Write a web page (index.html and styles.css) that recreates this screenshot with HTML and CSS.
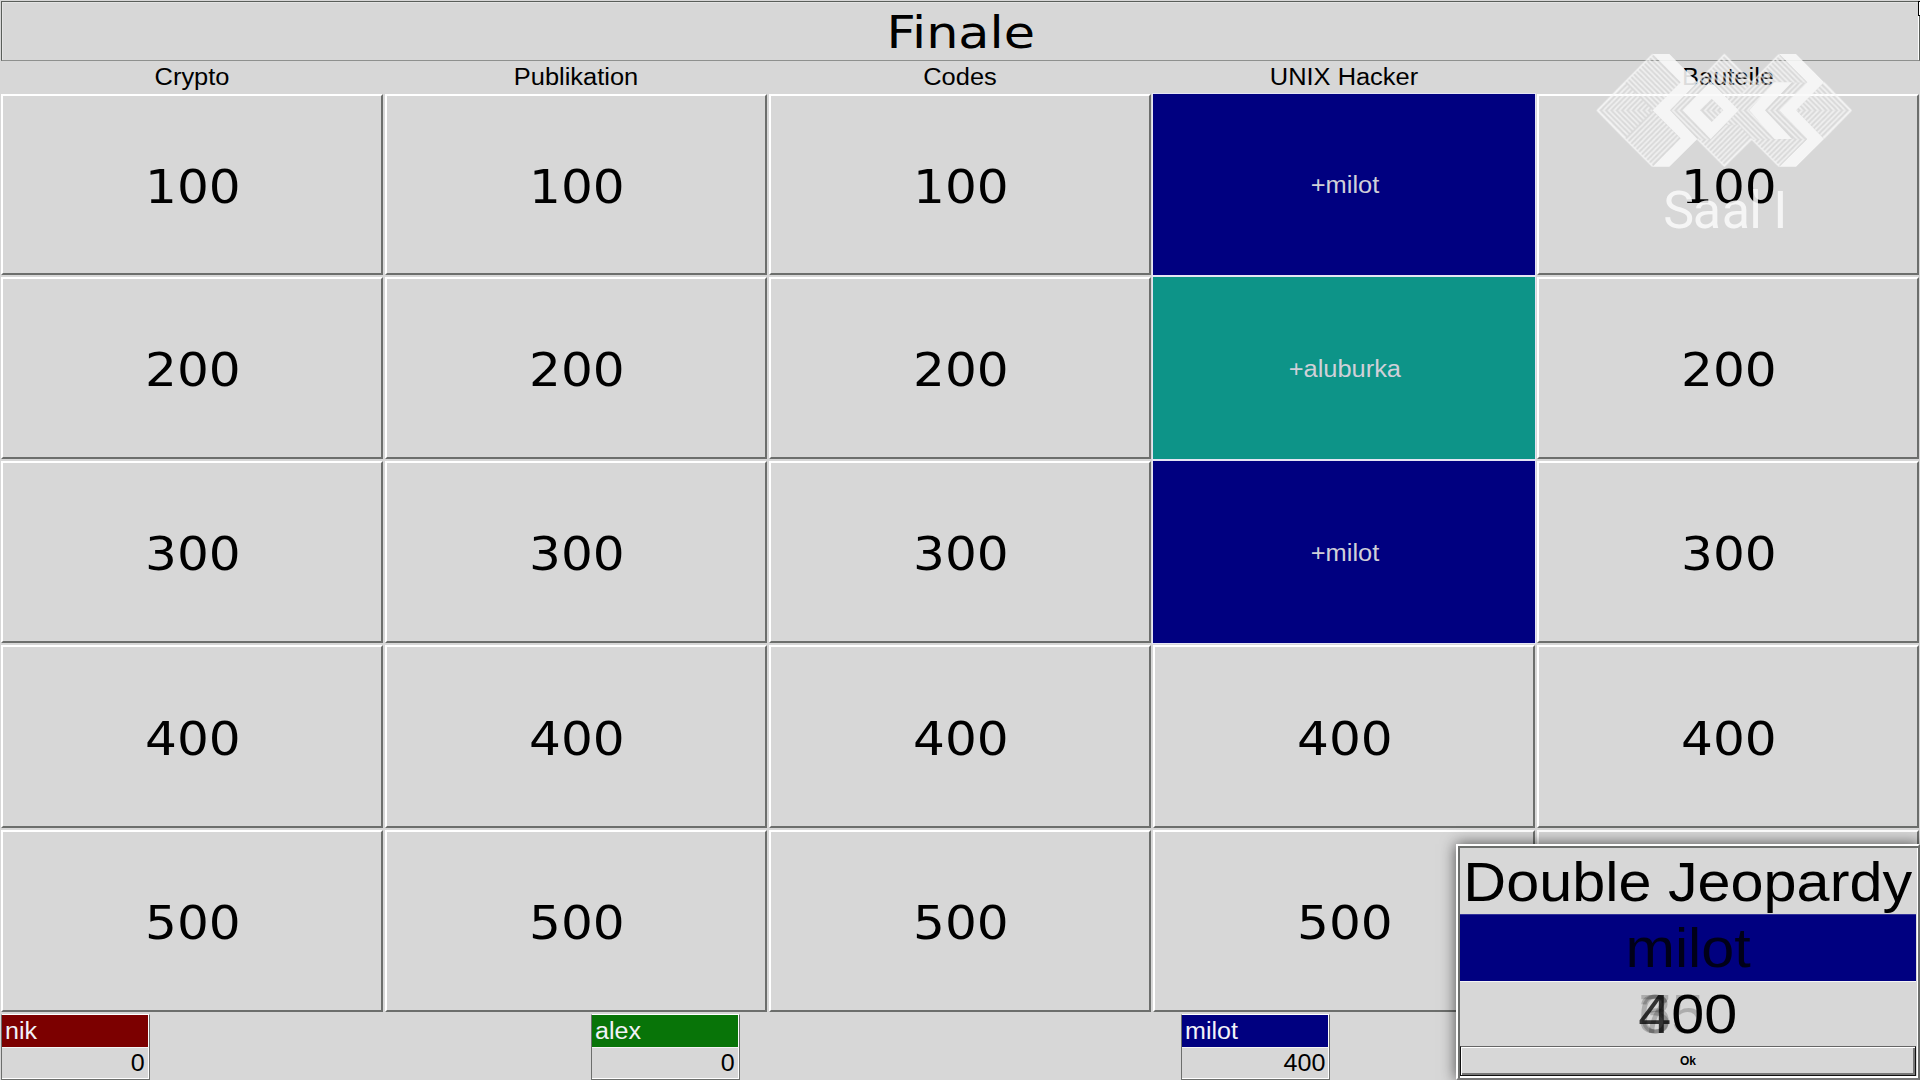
FILE: index.html
```html
<!DOCTYPE html>
<html lang="de">
<head>
<meta charset="utf-8">
<title>Finale</title>
<link rel="stylesheet" href="styles.css">
</head>
<body>
<main class="board">
  <h1 class="title"><span>Finale</span></h1>
  <div class="categories">
    <span>Crypto</span><span>Publikation</span><span>Codes</span><span>UNIX Hacker</span><span>Bauteile</span>
  </div>
  <div class="grid">
    <button class="cell"><span>100</span></button><button class="cell"><span>100</span></button><button class="cell"><span>100</span></button><button class="cell taken blue"><span>+milot</span></button><button class="cell"><span>100</span></button>
    <button class="cell"><span>200</span></button><button class="cell"><span>200</span></button><button class="cell"><span>200</span></button><button class="cell taken teal"><span>+aluburka</span></button><button class="cell"><span>200</span></button>
    <button class="cell"><span>300</span></button><button class="cell"><span>300</span></button><button class="cell"><span>300</span></button><button class="cell taken blue"><span>+milot</span></button><button class="cell"><span>300</span></button>
    <button class="cell"><span>400</span></button><button class="cell"><span>400</span></button><button class="cell"><span>400</span></button><button class="cell"><span>400</span></button><button class="cell"><span>400</span></button>
    <button class="cell"><span>500</span></button><button class="cell"><span>500</span></button><button class="cell"><span>500</span></button><button class="cell"><span>500</span></button><button class="cell"><span></span></button>
  </div>
  <div class="players">
    <div class="player"><div class="name red"><span>nik</span></div><div class="score"><span>0</span></div></div>
    <div class="player"><div class="name green"><span>alex</span></div><div class="score"><span>0</span></div></div>
    <div class="player"><div class="name blue"><span>milot</span></div><div class="score"><span>400</span></div></div>
  </div>
</main>

<section class="dialog">
  <div class="dialog-title"><span>Double Jeopardy</span></div>
  <div class="dialog-name"><span>milot</span></div>
  <div class="dialog-bet"><span class="bet"><i>4</i>00<b class="ghost">3</b><b class="ghost">6</b><b class="ghost">75</b></span></div>
  <button class="ok"><span>Ok</span></button>
</section>

<svg class="logo" viewBox="0 0 870 600" width="290" height="200">
  <defs>
    <pattern id="up" x="54" y="211" width="16" height="16" patternUnits="userSpaceOnUse">
      <path d="M-4 4L4-4M-4 20L20-4M12 20L20 12" stroke="#fafafa" stroke-width="5"/>
    </pattern>
    <pattern id="down" x="54" y="211" width="16" height="16" patternUnits="userSpaceOnUse">
      <path d="M-4-4L20 20M-4 12L4 20M12-4L20 4" stroke="#fafafa" stroke-width="5"/>
    </pattern>
    <g id="tip">
      <path fill="url(#up)" d="M50 211L134 127L218 211Z"/>
      <path fill="url(#down)" d="M50 211L134 295L218 211Z"/>
      <path fill="none" stroke="#fafafa" stroke-width="4" d="M134 127L52 211L134 295"/>
    </g>
  </defs>
  <g opacity=".88">
    <use href="#tip"/>
    <path fill="url(#down)" d="M134 127L218 42L302 127L218 211Z"/>
    <path fill="url(#up)" d="M134 295L218 211L302 295L218 380Z"/>
    <path fill="none" stroke="#fafafa" stroke-width="4" d="M134 127L218 43M134 295L218 379M352 127L433 44L515 127L598 43M352 297L433 378L515 297L598 379"/>
    <path fill="url(#down)" d="M352 127L433 42L515 127L475 170L433 170L395 127ZM515 127L598 42L682 127Z"/>
    <path fill="url(#up)" d="M352 297L395 297L435 255L475 255L515 297L433 380ZM515 297L682 297L598 380Z"/>
    <path fill="url(#up)" d="M270 211L352 127H395L308 211ZM433 170L475 170L515 127H590L508 211H475ZM555 211L640 127H682L598 211ZM360 211L395 176L430 211Z"/>
    <path fill="url(#down)" d="M270 211L352 297H395L308 211ZM435 253L475 255L515 297H590L508 211H475ZM555 211L640 297H682L598 211ZM360 211L395 246L430 211Z"/>
    <g transform="translate(865 0) scale(-1 1)"><use href="#tip"/></g>
    <g fill="#fafafa">
      <path d="M218 42H268L352 127L270 211L352 297L268 380H218L302 295L218 211L302 127Z"/>
      <path d="M598 42H648L732 127L648 211L732 297L648 380H598L682 297L598 211L682 127Z"/>
      <path d="M584 127H636L555 211L636 297H584L508 211Z"/>
      <path fill-rule="evenodd" d="M308 211L392 125L476 211L392 297ZM360 211L395 246L430 211L395 176Z"/>
    </g>
    <text class="hall" x="250 338 425 508 580" y="563">SaalI</text>
  </g>
</svg>
<div class="cursor"></div>
</body>
</html>
```
FILE: styles.css
```css
* { box-sizing: border-box; }
body {
  margin: 0;
  width: 1920px;
  height: 1080px;
  overflow: hidden;
  background: #d7d7d7;
  color: #000;
  font-family: "Liberation Sans", Arial, sans-serif;
}
span { display: inline-block; white-space: nowrap; }
button { margin: 0; padding: 0; background: #d7d7d7; color: inherit; font-family: inherit; border-radius: 0; }

.board { display: flex; flex-direction: column; height: 1080px; }
.title {
  flex: none;
  height: 60px;
  margin: 1px 0 0 1px;
  border: 1px solid #5a5e5a;
  border-bottom-color: #8e908e;
  box-shadow: inset 1px 1px 0 #e4e4e4, inset -1px 0 0 #fff;
  font: 400 45px/62px "DejaVu Sans", Verdana, sans-serif;
  text-align: center;
}
.title span { transform: scaleX(1.13); }
.categories {
  flex: none;
  height: 32px;
  display: grid;
  grid-template-columns: repeat(5, 384px);
  font-size: 23px;
  line-height: 33px;
  text-align: center;
}
.categories span { transform: scaleX(1.105); }

.grid {
  flex: none;
  display: grid;
  grid-template-columns: repeat(5, 384px);
  grid-template-rows: 183px 184px 184px 185px 184px;
}
.cell {
  margin: 1px;
  border: 2px solid;
  border-color: #fff #6c6e6c #6c6e6c #fff;
  font: 400 46px/1 "DejaVu Sans", Verdana, sans-serif;
}
.cell span { transform: translate(1px, 2px) scaleX(1.09); }
.cell.taken {
  border: 0;
  box-shadow: 0 0 0 1px #e4e4f4;
  color: #d0d0d8;
  font: 400 23px/1 "Liberation Sans", Arial, sans-serif;
}
.taken span { transform: translate(1px, 1px) scaleX(1.105); }
.blue { background: #000080; }
.teal { background: #0d9488; }
.red { background: #7c0000; }
.green { background: #087408; }

.players {
  flex: 1;
  display: grid;
  grid-template-columns: repeat(3, 590px);
  padding: 1px 0 0 1px;
  font-size: 23px;
}
.player {
  width: 149px;
  height: 66px;
  border: 1px solid #6c6e6c;
  border-top-color: #fff;
  box-shadow: inset -1px -1px 0 #fff;
}
.name {
  width: 146px;
  height: 32px;
  padding-left: 3px;
  line-height: 32px;
  color: #f2f2f8;
}
.score {
  height: 32px;
  border-top: 1px solid #f4f4f4;
  padding-right: 4px;
  line-height: 30px;
  text-align: right;
}
.name span { transform: scaleX(1.09); transform-origin: left; }
.score span { transform: scaleX(1.09); transform-origin: right; }

.dialog {
  position: absolute;
  left: 1456px;
  top: 844px;
  width: 464px;
  height: 236px;
  display: flex;
  flex-direction: column;
  background: #d7d7d7;
  border: 2px solid #fff;
  border-right-color: #6c6e6c;
  border-bottom-color: #777;
  padding: 2px;
  box-shadow: inset 2px 2px 0 #6c6e6c, inset -1px 0 0 #fff, inset 0 -2px 0 #fff, 0 0 14px rgba(0,0,0,.65);
  font-size: 56px;
  text-align: center;
}
.dialog-title { height: 66px; line-height: 67px; display: flex; justify-content: center; }
.dialog-name { height: 67px; line-height: 66px; background: #000080; color: #000018; border-top: 1px solid #32329a; }
.dialog-bet { height: 66px; line-height: 64px; border-top: 1px solid #f4f4f4; }
.dialog-title span, .dialog-name span, .bet { transform: scaleX(1.06); }
.bet { position: relative; }
.bet i { font-style: normal; color: #333; }
.ghost { position: absolute; left: 0; top: 0; font-weight: 400; color: rgba(0,0,0,.2); }
.ok {
  height: 30px;
  border: 1px solid #111;
  border-top: 1px solid #666;
  box-shadow: inset 1px 1px 0 #fff, inset -2px -2px 0 #777;
  font-size: 12px;
  font-weight: 700;
}

.logo { position: absolute; left: 1580px; top: 40px; }
.hall { font: 156px Roboto, "Liberation Sans", sans-serif; fill: #fafafa; }
.cursor {
  position: absolute;
  left: 1918px;
  top: 1px;
  width: 4px;
  height: 15px;
  background: #fff;
  border: 1px solid #000;
}
```
